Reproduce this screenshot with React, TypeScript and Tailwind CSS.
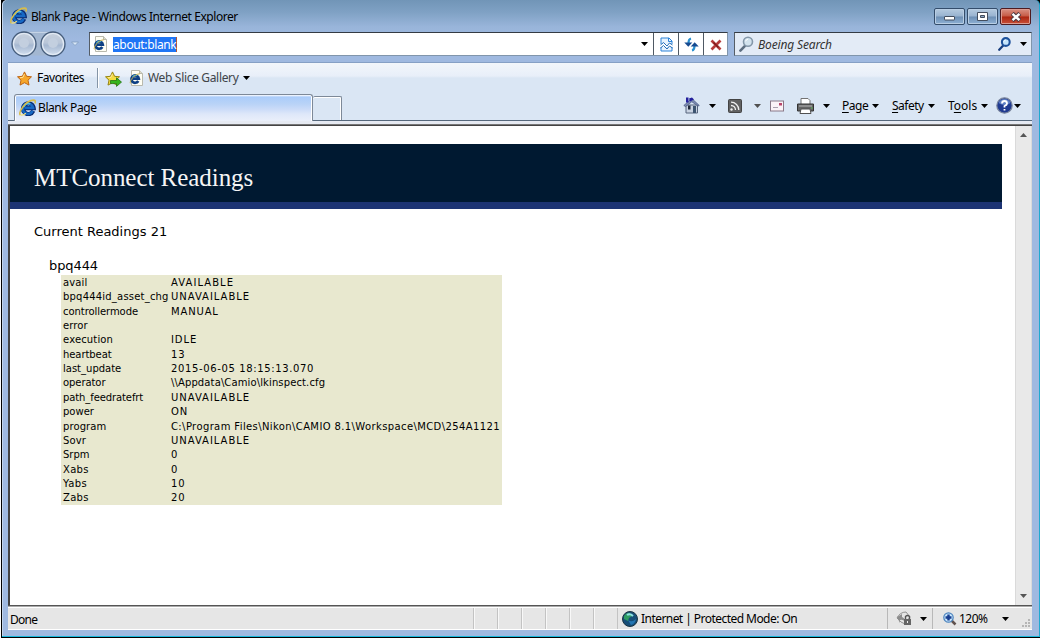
import React from "react";

const ui = "font-['Noto_Sans','Open_Sans',sans-serif] text-[12px] whitespace-pre";
const verdana = "font-['DejaVu_Sans',sans-serif] whitespace-pre";

const readings: [string, string, string, string][] = [
  ["avail", "tracking-[0.15px]", "AVAILABLE", "tracking-[1.05px]"],
  ["bpq444id_asset_chg", "tracking-[0.2px]", "UNAVAILABLE", "tracking-[0.97px]"],
  ["controllermode", "tracking-[-0.06px]", "MANUAL", "tracking-[0.85px]"],
  ["error", "tracking-[0.1px]", "", ""],
  ["execution", "tracking-[0.15px]", "IDLE", "tracking-[0.9px]"],
  ["heartbeat", "tracking-[-0.07px]", "13", "tracking-[1px]"],
  ["last_update", "tracking-[0px]", "2015-06-05 18:15:13.070", "tracking-[0.63px]"],
  ["operator", "tracking-[-0.07px]", "\\\\Appdata\\Camio\\lkinspect.cfg", "tracking-[0.12px]"],
  ["path_feedratefrt", "tracking-[-0.1px]", "UNAVAILABLE", "tracking-[0.97px]"],
  ["power", "tracking-[0px]", "ON", "tracking-[0.9px]"],
  ["program", "tracking-[0.1px]", "C:\\Program Files\\Nikon\\CAMIO 8.1\\Workspace\\MCD\\254A1121", "tracking-[0.385px]"],
  ["Sovr", "tracking-[0.15px]", "UNAVAILABLE", "tracking-[0.97px]"],
  ["Srpm", "tracking-[0px]", "0", ""],
  ["Xabs", "tracking-[0.3px]", "0", ""],
  ["Yabs", "tracking-[0.4px]", "10", "tracking-[1px]"],
  ["Zabs", "tracking-[0.3px]", "20", "tracking-[1px]"],
];

function Caret({ className = "" }: { className?: string }) {
  return (
    <svg className={"shrink-0 " + className} width="7" height="4" viewBox="0 0 7 4">
      <path d="M0 0h7L3.500 4z" fill="currentColor" />
    </svg>
  );
}

function IeLogo({ className = "" }: { className?: string }) {
  return (
    <svg className={"shrink-0 " + className} width="17" height="17" viewBox="0 0 16 16" fill="none">
      <path d="M13.4 11.2A5 5 0 1 1 13.8 8.7H5.2" stroke="#0a2a70" strokeWidth="4" />
      <path d="M12.900 11.200A4.900 4.900 0 1 1 13.300 8.400H5.200" stroke="#1668c4" strokeWidth="2.500" />
      <path d="M4.500 7.200C5.400 4.600 8 3.600 10.600 4.500" stroke="#4fc0ee" strokeWidth="1.500" />
      <path d="M1.200 15.200C-.8 12.200 6 1.600 13.500 1.100c2.200 0 2.200 1.500 1.500 3.100" stroke="#d8bd4a" strokeWidth="1.500" />
      <path d="M1.500 14.800c1.300 1 3.600-.3 5-1.400" stroke="#f3df7c" strokeWidth="1.100" />
    </svg>
  );
}

function IePage() {
  return (
    <svg className="shrink-0" width="15" height="16" viewBox="0 0 15 16" fill="none">
      <path d="M2.500.500h8l3 3v12h-11z" fill="#fffef4" stroke="#b9b9ad" />
      <path d="M10.500.500v3h3" fill="#dedccb" stroke="#b9b9ad" />
      <path d="M9.300 11a3.700 3.700 0 1 1 .5-2.400H4" stroke="#0d3f83" strokeWidth="2.700" />
      <path d="M3.600 7.200c1-2 3-2.400 4.600-1.400" stroke="#44b6df" strokeWidth="1.200" />
      <path d="M1.400 13.400C.2 11.400 5 4 10.800 3.800" stroke="#c9b04a" />
    </svg>
  );
}

function Star({ plus = false }: { plus?: boolean }) {
  return (
    <svg className="shrink-0 translate-y-px" width="17" height="16" viewBox="0 0 17 16">
      <path
        d="M7.500.900 9.600 5.300l4.900.500L11 9.200l1 4.900-4.500-2.400L3 14.100l1-4.900L.500 5.800l4.900-.500z"
        fill={plus ? "#f4dc3f" : "#f6a72b"}
        stroke={plus ? "#958411" : "#bf6514"}
      />
      <path d="M7.400 3 6 6.300l-3 .400" fill="none" stroke="#ffe49a" />
      {plus && <path d="M5.500 9.500h6V6.800l5 4.300-5 4.300v-2.800h-6z" fill="#35b51e" stroke="#267416" strokeWidth=".8" />}
    </svg>
  );
}

function Magnifier({ pale = false, className = "" }: { pale?: boolean; className?: string }) {
  return (
    <svg className={"shrink-0 " + className} width={pale ? 15 : 13} height={pale ? 16 : 14} viewBox="0 0 15 16" fill="none">
      <path d="M6 9.800 1.400 14.600" stroke={pale ? "#5d6e80" : "#173d7d"} strokeWidth="2.600" strokeLinecap="round" />
      <circle cx="9" cy="5.700" r="4.500" fill={pale ? "#d3e3ee" : "#c4e4fb"} stroke={pale ? "#8497a9" : "#1d519b"} strokeWidth={pale ? 1.6 : 2.4} />
      <path d="M6.700 5.300A2.500 2.500 0 0 1 9 3.200" stroke="#fff" />
    </svg>
  );
}

function NavOrbs() {
  return (
    <svg className="-mt-[2px] shrink-0" width="70" height="30" viewBox="0 0 70 30">
      <defs>
        <linearGradient id="orb" x1="0" y1="0" x2="0" y2="1">
          <stop offset="0" stopColor="#c9d2de" />
          <stop offset=".45" stopColor="#b9c6d8" />
          <stop offset=".55" stopColor="#a6b8d1" />
          <stop offset="1" stopColor="#d6e2f1" />
        </linearGradient>
      </defs>
      <path d="M12 2.500h30v24H12z" fill="#a3b7d1" />
      <path d="M15 3.500h24" stroke="#c5d4e6" />
      {[14, 43].map((cx) => (
        <g key={cx}>
          <circle cx={cx} cy="15" r="12" fill="url(#orb)" stroke="#465d7b" strokeWidth="1.300" />
          <circle cx={cx} cy="15" r="10.500" fill="none" stroke="#e3ebf5" strokeWidth="1.200" />
          <circle cx={cx} cy="14" r="5" fill="#c3cfdf" />
        </g>
      ))}
      <path d="M61.500 13h7l-3.500 3.500z" fill="#d9e8f8" stroke="#7f9bbd" strokeWidth=".8" />
    </svg>
  );
}

function WindowButtons() {
  const base =
    "flex h-[17px] w-[31px] items-center justify-center rounded-[2px] border border-[#344d6b] shadow-[inset_0_0_0_1px_#b9cee4]";
  const blue = " bg-[linear-gradient(#b5cadf_0%,#98b3d0_48%,#6d8fb4_52%,#8eb0d4_100%)]";
  return (
    <div className="mt-[8px] flex gap-[2px]">
      <div className={base + blue}>
        <svg className="translate-y-px" width="12" height="6" viewBox="0 0 12 6"><rect x=".5" y="1.500" width="10" height="3.500" rx=".5" fill="#fff" stroke="#434d5d" /></svg>
      </div>
      <div className={base + blue}>
        <svg width="11" height="9" viewBox="0 0 11 9"><path d="M.500.500h10v8H.500z" fill="#fff" stroke="#434d5d" /><path d="M3.500 3.500h4v2h-4z" fill="#8da8c6" stroke="#434d5d" /></svg>
      </div>
      <div className="flex h-[17px] w-[31px] items-center justify-center rounded-[2px] border border-[#4e1b20] bg-[linear-gradient(#d99184_0%,#c65a45_48%,#ab2510_52%,#ca5039_100%)] shadow-[inset_0_0_0_1px_#dc9b90]">
        <svg width="12" height="10" viewBox="0 0 12 10"><path d="M2.200 1.500 9.800 8.500M9.800 1.500 2.200 8.500" stroke="#4a3840" strokeWidth="4.400" /><path d="M2.500 1.800 9.500 8.200M9.500 1.800 2.500 8.200" stroke="#fff" strokeWidth="2.400" /></svg>
      </div>
    </div>
  );
}

function TitleBar() {
  return (
    <div className="flex h-[31px] pl-[8px] pr-[8px]">
      <IeLogo className="mt-[7px]" />
      <span className={ui + " ml-[4px] mt-[8px] flex-1 leading-[18px] tracking-[-0.44px]"}>Blank Page - Windows Internet Explorer</span>
      <WindowButtons />
    </div>
  );
}

function AddressRow() {
  return (
    <div className="flex h-[31px] pl-[8px] pr-[7px]">
      <NavOrbs />
      <div className="ml-[9px] mt-px flex h-[24px] w-[639px] border border-b-[#8095ab] border-l-[#555d66] border-r-[#8095ab] border-t-[#343b44] bg-white">
        <div className="flex flex-1 items-center pl-[3px]">
          <IePage />
          <span className={ui + " ml-[5px] h-[15px] border-r border-[#b0583a] bg-[#1f75f5] leading-[15px] text-white tracking-[-0.36px]"}>about:blank</span>
          <Caret className="ml-auto mr-[5px]" />
        </div>
        <div className="flex w-[25px] items-center justify-center border-l border-[#4f5964]">
          <svg width="13" height="15" viewBox="0 0 13 15" fill="none">
            <path d="M1 7V1h8l3 3v3M1 10v4h11v-4" fill="#e7f2fd" stroke="#2d83d8" />
            <path d="M8.500 1v3.500H12" stroke="#2d83d8" />
            <path d="m.500 8 3-2.500L7 9l2.500-3L12.500 8M.500 11l3-2.500L7 12l2.500-3 3 2" stroke="#236cb8" />
          </svg>
        </div>
        <div className="flex w-[25px] items-center justify-center border-l border-[#4f5964]">
          <svg width="15" height="15" viewBox="0 0 15 15" fill="none">
            <path d="M7 1.500C5 2 4.500 3.500 4.500 6" stroke="#2a90cf" strokeWidth="2.200" />
            <path d="M.300 5.500h8L4.300 9.800z" fill="#154a90" />
            <path d="M8 13.500c2-.500 2.500-2 2.500-4.500" stroke="#2a90cf" strokeWidth="2.200" />
            <path d="M6.700 9.500h8l-4-4.300z" fill="#154a90" />
          </svg>
        </div>
        <div className="flex w-[24px] items-center justify-center border-l border-[#4f5964]">
          <svg className="translate-y-px" width="12" height="12" viewBox="0 0 12 12"><path d="M1.500 1.500 10.500 10.500M10.500 1.500 1.500 10.500" stroke="#b53a3a" strokeWidth="2.700" /><path d="m3.500 3.500 5 5" stroke="#7c1a1a" strokeWidth="1.500" /></svg>
        </div>
      </div>
      <div className="ml-[6px] mt-px flex h-[24px] flex-1 items-center border border-b-[#8095ab] border-l-[#555d66] border-r-[#8095ab] border-t-[#343b44] bg-[#e3ebf6] pl-[4px] pr-[4px]">
        <Magnifier pale />
        <span className={ui + " ml-[4px] mt-[2px] flex-1 italic leading-[16px] text-[#333] tracking-[-0.15px]"}>Boeing Search</span>
        <Magnifier />
        <Caret className="ml-[9px]" />
      </div>
    </div>
  );
}

function FavoritesBar() {
  return (
    <div className="flex h-[31px] items-center bg-[linear-gradient(#f2f6fb_0px,#e8eff9_13px,#dae6f4_15px)] pl-[9px]">
      <Star />
      <span className={ui + " ml-[3px] w-[60px] tracking-[-0.45px]"}>Favorites</span>
      <div className="h-[20px] w-[2px] border-l border-[#8494a6] bg-white" />
      <div className="ml-[6px] flex items-center">
        <Star plus />
        <div className="ml-[7px]"><IePage /></div>
        <span className={ui + " ml-[4px] w-[95px] text-[#404448] tracking-[-0.33px]"}>Web Slice Gallery</span>
        <Caret />
      </div>
    </div>
  );
}

function MenuLabel({ pre = "", u, post, className }: { pre?: string; u: string; post: string; className: string }) {
  return (
    <span className={ui + " " + className}>
      {pre}
      <span className="underline underline-offset-2">{u}</span>
      {post}
    </span>
  );
}

function CommandBar() {
  return (
    <div className="mb-[2px] flex items-center pr-[11px]">
      <svg width="17" height="17" viewBox="0 0 17 17">
        <path d="M3 8h11.500v8H3z" fill="#c9d3e2" stroke="#56647c" />
        <path d="m.8 8.500 8-7 7.500 7-1.300.500-6.200-4.200L2.500 9.500z" fill="#7d8db4" stroke="#46547c" strokeWidth=".7" />
        <path d="M3 .500h2.500v5H3zM6 1.500l3-1 2 2-4 2z" fill="#231f9c" />
        <path d="M5 8.500h2.500v4H5z" fill="#1d2638" />
        <path d="M10 9h3v7h-3z" fill="#3d5470" />
      </svg>
      <Caret className="ml-[9px]" />
      <svg className="ml-[12px]" width="14" height="14" viewBox="0 0 14 14" fill="none">
        <rect x=".5" y=".5" width="13" height="13" rx="1" fill="#626262" stroke="#434343" />
        <circle cx="3.500" cy="10.500" r="1.200" fill="#f2f2f2" />
        <path d="M3 6.500a4.500 4.500 0 0 1 4.500 4.500M3 3.200A7.800 7.800 0 0 1 10.800 11" stroke="#f2f2f2" strokeWidth="1.300" />
      </svg>
      <Caret className="ml-[12px] text-[#505050]" />
      <svg className="ml-[9px]" width="14" height="12" viewBox="0 0 14 12">
        <rect x=".5" y="1" width="13" height="10" fill="#fbf2f7" stroke="#897887" />
        <path d="M9 3h3v2.500H9z" fill="#b8456a" />
        <path d="M3 7.500h5" stroke="#aaa0ae" />
      </svg>
      <svg className="ml-[13px]" width="17" height="16" viewBox="0 0 17 16">
        <path d="M4 6V.500h7l2 2V6" fill="#fff" stroke="#737373" />
        <path d="M.500 6h16v7H.500z" fill="#646464" stroke="#333" />
        <path d="M2 8h13" stroke="#b8b8b8" />
        <path d="M4 11h9l1 4.500H3z" fill="#fff" stroke="#515151" />
        <path d="M14 10h1.500" stroke="#55c850" />
      </svg>
      <Caret className="ml-[9px]" />
      <MenuLabel u="P" post="age" className="ml-[12px] w-[30px] tracking-[-0.5px]" />
      <Caret />
      <MenuLabel u="S" post="afety" className="ml-[13px] w-[36px] tracking-[-0.5px]" />
      <Caret />
      <MenuLabel pre="T" u="o" post="ols" className="ml-[13px] w-[33px]" />
      <Caret />
      <svg className="ml-[8px]" width="17" height="17" viewBox="0 0 17 17">
        <circle cx="8.500" cy="8.500" r="7.700" fill="#203a90" stroke="#7c879e" strokeWidth="1.200" />
        <path d="M2.500 6a6.500 6.500 0 0 1 12 0q-6 4-12 0z" fill="#5f7fc4" />
        <path d="M6 6.500Q6 4 8.500 4T11 6.500Q11 8 8.500 9v1.500M8.500 12v1.500" stroke="#fff" strokeWidth="1.800" fill="none" />
      </svg>
      <Caret className="ml-[1px]" />
    </div>
  );
}

function TabRow() {
  return (
    <div className="flex h-[27px] items-end border-b border-[#56687c] bg-[#dae6f4] pl-[6px]">
      <div className="-mb-px flex h-[27px] w-[299px] items-center rounded-t-[3px] border border-b-0 border-[#7d8998] bg-[linear-gradient(#fff_0px,#aaccfa_2px,#b9d3f7_9px,#cadbf8_14px,#dee7f9_19px,#eaeffa_26px)] pl-[4px] shadow-[inset_1px_0_0_#fff,inset_-1px_0_0_#fff]">
        <IeLogo />
        <span className={ui + " ml-[2px] tracking-[-0.42px]"}>Blank Page</span>
      </div>
      <div className="h-[24px] w-[29px] rounded-t-[2px] border border-b-0 border-l-0 border-[#7d8998] shadow-[inset_0_1px_0_#fff,inset_-1px_0_0_#fff]" />
      <div className="ml-auto flex h-full items-center"><CommandBar /></div>
    </div>
  );
}

function Readings() {
  return (
    <div className="h-full w-[1005px]">
      <div className="mt-[18px] h-[65px] w-[992px] border-b-[7px] border-[#1d3474] bg-[#001931] pl-[24px] pt-[19px]">
        <h1 className="whitespace-pre font-['Liberation_Serif',serif] text-[25px] leading-[30px] tracking-[-0.05px] text-[#f5f5f5]">MTConnect Readings</h1>
      </div>
      <p className={verdana + " ml-[24px] mt-[14px] text-[13px] leading-[18px] tracking-[0px]"}>Current Readings 21</p>
      <p className={verdana + " ml-[39px] mt-[16px] text-[13px] leading-[18px] tracking-[-0.1px]"}>bpq444</p>
      <div className="ml-[51px] grid h-[230px] w-[441px] grid-cols-[108px_1fr] grid-rows-[repeat(16,14.36px)] bg-[#e8e8cf] pl-[2px]">
        {readings.map(([name, nameTracking, value, valueTracking]) => (
          <React.Fragment key={name}>
            <span className={verdana + " text-[10px] leading-[15px] " + nameTracking}>{name}</span>
            <span className={verdana + " text-[10px] leading-[15px] " + valueTracking}>{value}</span>
          </React.Fragment>
        ))}
      </div>
    </div>
  );
}

function ScrollBar() {
  return (
    <div className="flex w-[17px] flex-col items-center justify-between border-x border-[#dadada] bg-[#e9e9e9] py-[7px] text-[#555]">
      <Caret className="rotate-180" />
      <Caret />
    </div>
  );
}

function StatusBar() {
  return (
    <div className="flex h-[22px] items-stretch border-b border-white bg-[#e6e6e6]">
      <span className={ui + " w-[465px] pl-[2px] leading-[23px] tracking-[-0.7px]"}>Done</span>
      {[0, 1, 2, 3, 4, 5].map((i) => (
        <div key={i} className="w-[24px] border-l border-[#c3c3c3] shadow-[inset_1px_0_0_#f8f8f8]" />
      ))}
      <div className="flex w-[270px] items-center border-l border-[#c3c3c3] pl-[4px]">
        <svg width="16" height="16" viewBox="0 0 16 16">
          <circle cx="8" cy="8" r="7.500" fill="#174e78" stroke="#1a3342" />
          <path d="M2 5q3-4 6-3l2 3-3 2-1 3-4-2z" fill="#2f9d62" />
          <path d="M6 9q4 3 8-1-1 5-5 6z" fill="#2477b4" />
          <path d="M5 4q3-2 6 1" stroke="#8ee1e3" strokeWidth="2" fill="none" />
        </svg>
        <span className={ui + " ml-[3px] pt-px tracking-[-0.55px]"}>Internet | Protected Mode: On</span>
      </div>
      <div className="flex w-[45px] items-center border-l border-[#b8b8b8] pl-[8px]">
        <svg width="17" height="15" viewBox="0 0 17 15">
          <path d="M1 7q3-6 9-6l4 5-5 7-4-2z" fill="#e5e5e5" stroke="#929292" />
          <path d="m1 6 5-3v3q3 1 3 5-2-3-5-2v3z" fill="#8d8d8d" />
          <path d="M8 8h7v6H8z" fill="#656565" />
          <path d="M9.500 8V5.500q2-2 4 0V8" fill="none" stroke="#555" strokeWidth="1.400" />
          <path d="M11 10h1v2h-1z" fill="#eee" />
        </svg>
        <Caret className="ml-[7px]" />
      </div>
      <div className="flex flex-1 items-center border-l border-[#b8b8b8] pl-[10px]">
        <svg width="14" height="14" viewBox="0 0 14 14">
          <path d="m8.500 8.500 4 4" stroke="#60524e" strokeWidth="2.500" />
          <circle cx="5.500" cy="5.500" r="4.700" fill="#c6e5fb" stroke="#4c83bd" strokeWidth="1.200" />
          <path d="M5.500 2.500v6m-3-3h6" stroke="#183d90" strokeWidth="2.400" />
        </svg>
        <span className={ui + " ml-[2px] w-[42px] tracking-[-0.5px]"}>120%</span>
        <Caret className="ml-[1px]" />
        <svg className="ml-auto mr-[1px] self-end" width="10" height="10" viewBox="0 0 10 10" fill="#b5b5b5">
          <path d="M7 0h2v2H7zM4 3h2v2H4zM7 3h2v2H7zM1 6h2v2H1zM4 6h2v2H4zM7 6h2v2H7z" />
        </svg>
      </div>
    </div>
  );
}

export default function App() {
  return (
    <div className="h-[640px] w-[1040px] overflow-hidden bg-white pl-px text-black">
      <div className="h-[638px] border-b border-l border-black bg-black">
        <div className="flex h-[637px] flex-col rounded-t-[5px] border-b border-r border-b-[#16b7da] border-r-[#1fa9cf] bg-[linear-gradient(#7195b7_0px,#7fa1c4_12px,#99b5da_27px,#9fb9e0_40px)] pl-0 shadow-[inset_1px_0_0_#c4d6ec]">
          <TitleBar />
          <AddressRow />
          <div className="ml-[6px] mr-[7px] flex h-[568px] flex-col border-t border-[#86a0c5]">
            <FavoritesBar />
            <TabRow />
            <div className="h-[4px] border-b border-[#777] bg-[#e6eaf2]" />
            <div className="flex h-[481px] border-l-2 border-t border-[#444] bg-white">
              <div className="flex-1"><Readings /></div>
              <ScrollBar />
            </div>
            <div className="h-[3px] border-b border-t border-b-white border-t-[#555] bg-[#aaa]" />
            <StatusBar />
          </div>
        </div>
      </div>
    </div>
  );
}
